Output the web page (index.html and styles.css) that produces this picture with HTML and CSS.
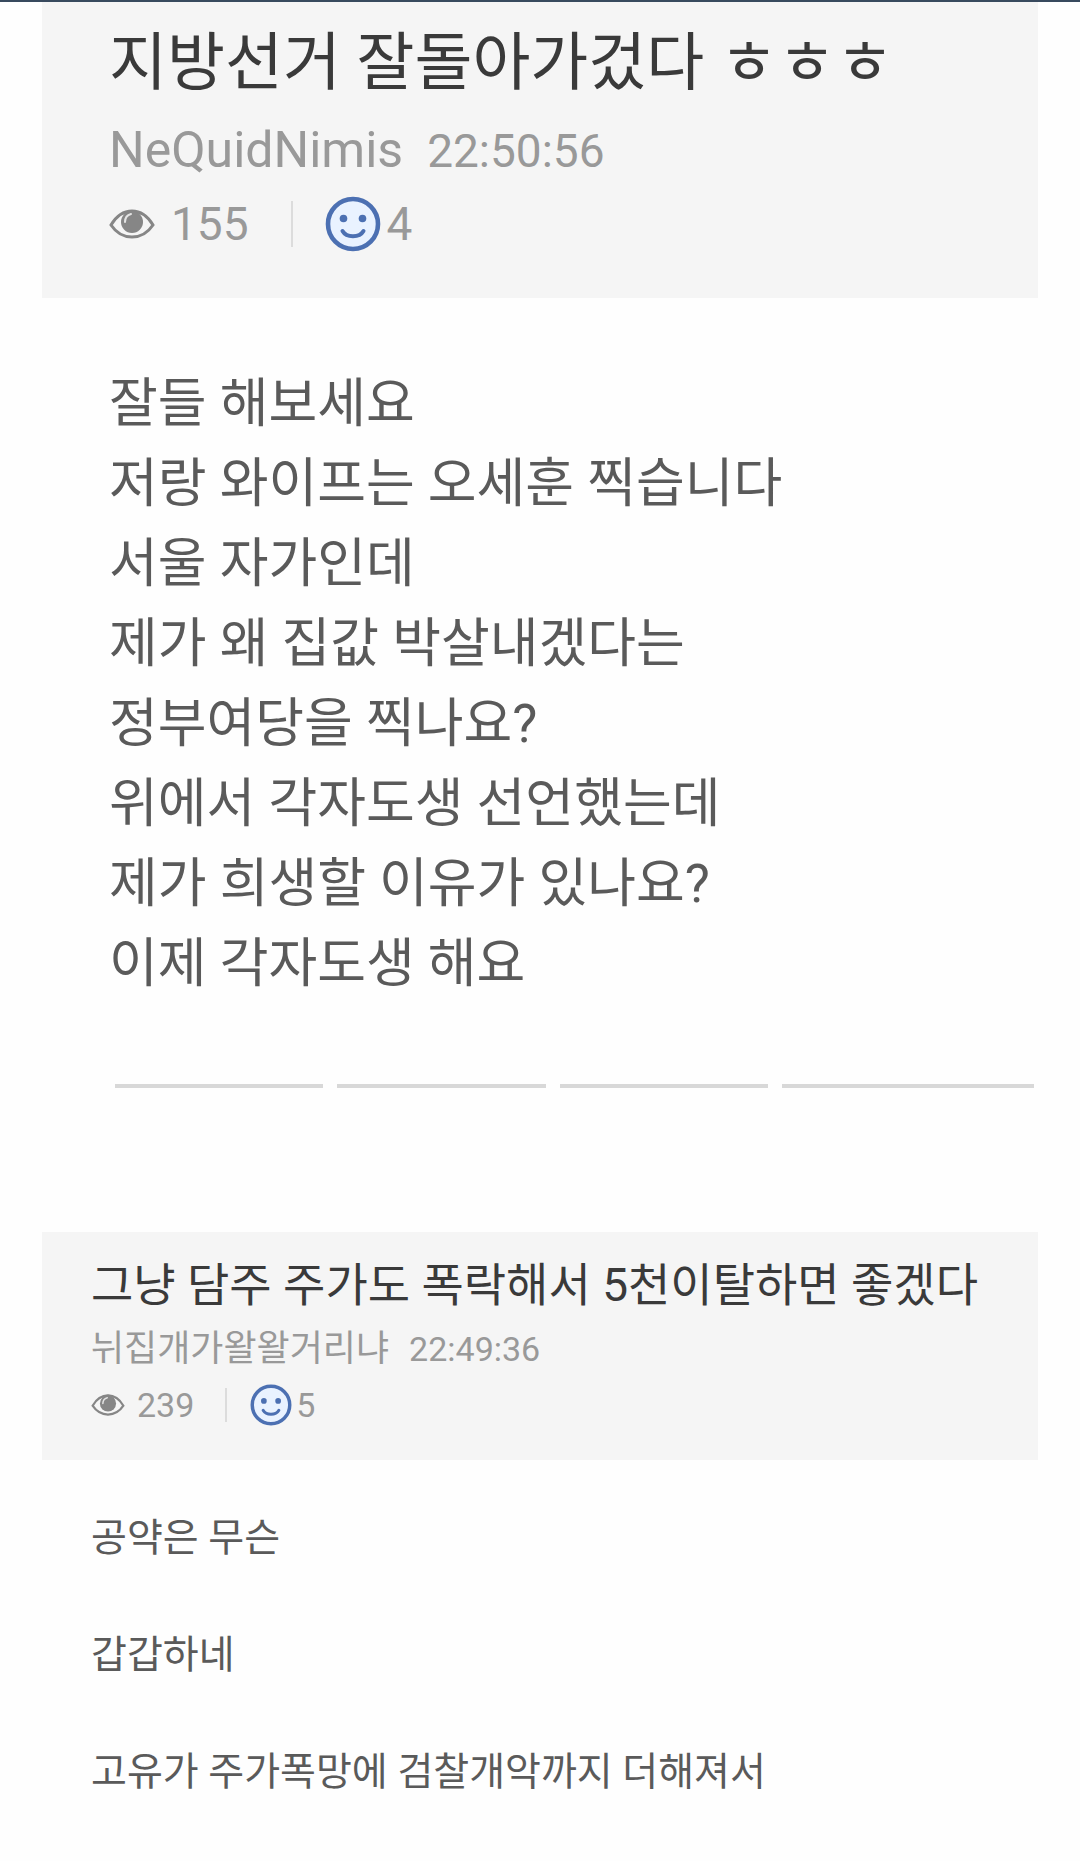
FILE: index.html
```html
<!DOCTYPE html>
<html lang="ko">
<head>
    <meta charset="UTF-8">
    <title>지방선거 잘돌아가겄다 ㅎㅎㅎ</title>
    <link rel="stylesheet" href="styles.css">
</head>
<body>

<!-- 첫번째 글 -->
<article class="post post-large">
    <header class="post-head">
        <h1 class="title">지방선거 잘돌아가겄다 ㅎㅎㅎ</h1>
        <div class="writer">
            <span>NeQuidNimis</span>
            <time>22:50:56</time>
        </div>
        <div class="info">
            <svg class="eye" viewBox="0 0 46 30">
                <path d="M2 16C8 6 15 2 23 2s15 4 21 14C38 25 31 28 23 28S8 25 2 16z" fill="none" stroke="#868686" stroke-width="3"/>
                <path d="M10 7C14 3 18 1 23 1s9 2 13 6c-4-2-8-3-13-3s-9 1-13 3z" fill="#868686"/>
                <circle cx="23" cy="13" r="11" fill="#868686"/>
                <path d="M16 13c0-4 2-7 6-8" fill="none" stroke="#e4e4e4" stroke-width="2" stroke-linecap="round"/>
            </svg>
            <span class="views">155</span>
            <span class="bar"></span>
            <svg class="smile" viewBox="0 0 56 56">
                <circle cx="28" cy="28" r="25" fill="#e9f2ff" stroke="#4c70b2" stroke-width="4.6"/>
                <circle cx="18.5" cy="22.5" r="3.8" fill="#4c70b2"/>
                <circle cx="37.5" cy="22.5" r="3.8" fill="#4c70b2"/>
                <path d="M17.5 35c4 7 17 7 21 0" fill="none" stroke="#4c70b2" stroke-width="4" stroke-linecap="round"/>
            </svg>
            <span class="likes">4</span>
        </div>
    </header>
    <div class="content">
        <p>잘들 해보세요</p>
        <p>저랑 와이프는 오세훈 찍습니다</p>
        <p>서울 자가인데</p>
        <p>제가 왜 집값 박살내겠다는</p>
        <p>정부여당을 찍나요?</p>
        <p>위에서 각자도생 선언했는데</p>
        <p>제가 희생할 이유가 있나요?</p>
        <p>이제 각자도생 해요</p>
    </div>
    <div class="lines">
        <span></span>
        <span></span>
        <span></span>
        <span class="last"></span>
    </div>
</article>

<!-- 두번째 글 -->
<article class="post post-small">
    <header class="post-head">
        <h2 class="title">그냥 담주 주가도 폭락해서 5천이탈하면 좋겠다</h2>
        <div class="writer">
            <span>뉘집개가왈왈거리냐</span>
            <time>22:49:36</time>
        </div>
        <div class="info">
            <svg class="eye" viewBox="0 0 46 30">
                <path d="M2 16C8 6 15 2 23 2s15 4 21 14C38 25 31 28 23 28S8 25 2 16z" fill="none" stroke="#868686" stroke-width="3"/>
                <path d="M10 7C14 3 18 1 23 1s9 2 13 6c-4-2-8-3-13-3s-9 1-13 3z" fill="#868686"/>
                <circle cx="23" cy="13" r="11" fill="#868686"/>
                <path d="M16 13c0-4 2-7 6-8" fill="none" stroke="#e4e4e4" stroke-width="2" stroke-linecap="round"/>
            </svg>
            <span class="views">239</span>
            <span class="bar"></span>
            <svg class="smile" viewBox="0 0 56 56">
                <circle cx="28" cy="28" r="25" fill="#e9f2ff" stroke="#4c70b2" stroke-width="4.6"/>
                <circle cx="18.5" cy="22.5" r="3.8" fill="#4c70b2"/>
                <circle cx="37.5" cy="22.5" r="3.8" fill="#4c70b2"/>
                <path d="M17.5 35c4 7 17 7 21 0" fill="none" stroke="#4c70b2" stroke-width="4" stroke-linecap="round"/>
            </svg>
            <span class="likes">5</span>
        </div>
    </header>
    <div class="content">
        <p>공약은 무슨</p>
        <p>갑갑하네</p>
        <p>고유가 주가폭망에 검찰개악까지 더해져서</p>
    </div>
</article>

</body>
</html>
```
FILE: styles.css
```css
* {
    margin: 0;
    padding: 0;
    box-sizing: border-box;
}

body {
    border-top: 2px solid #384a5e;
    background-color: #fefefe;
    font-family: Roboto, "Noto Sans CJK KR", sans-serif;
    color: #5a5a5a;
}

.post {
    margin: 0 42px;
}

.post-head {
    background-color: #f5f5f5;
}

.title {
    font-weight: 400;
    color: #3a3a3a;
}

.writer,
.info {
    display: flex;
    align-items: center;
    color: #999;
}

.writer {
    align-items: baseline;
}

.bar {
    width: 2px;
    background-color: #dcdcdc;
}

/* 첫번째 글 */
.post-large .post-head {
    padding: 19px 67px 46px;
}

.post-large .title {
    font-size: 63px;
    line-height: 84px;
}

.post-large .writer {
    gap: 24px;
    font-size: 50px;
    line-height: 90px;
}

.post-large time {
    font-size: 46px;
}

.post-large .info {
    font-size: 46px;
    line-height: 56px;
}

.post-large .eye {
    width: 46px;
    height: 30px;
    margin-right: 16px;
}

.post-large .bar {
    height: 46px;
    margin: 0 32px 0 42px;
}

.post-large .smile {
    width: 56px;
    height: 56px;
    margin-right: 6px;
}

.post-large .content {
    padding: 66px 67px;
    font-size: 53px;
    line-height: 80px;
}

.lines {
    display: flex;
    gap: 14px;
    padding: 14px 4px 0 73px;
}

.lines span {
    flex: 209;
    height: 4px;
    background-color: #d8d8d8;
}

.lines .last {
    flex: 253;
}

/* 두번째 글 */
.post-small {
    margin-top: 144px;
}

.post-small .post-head {
    padding: 20px 49px 31px;
}

.post-small .title {
    font-size: 46px;
    line-height: 66px;
}

.post-small .writer {
    gap: 20px;
    font-size: 36px;
    line-height: 63px;
}

.post-small time {
    font-size: 34px;
}

.post-small .info {
    font-size: 34px;
    line-height: 48px;
}

.post-small .eye {
    width: 34px;
    height: 22px;
    margin-right: 12px;
}

.post-small .bar {
    height: 34px;
    margin: 0 23px 0 31px;
}

.post-small .smile {
    width: 42px;
    height: 42px;
    margin-right: 4px;
}

.post-small .content {
    padding: 20px 49px 8px;
    font-size: 39px;
    line-height: 117px;
}
```
